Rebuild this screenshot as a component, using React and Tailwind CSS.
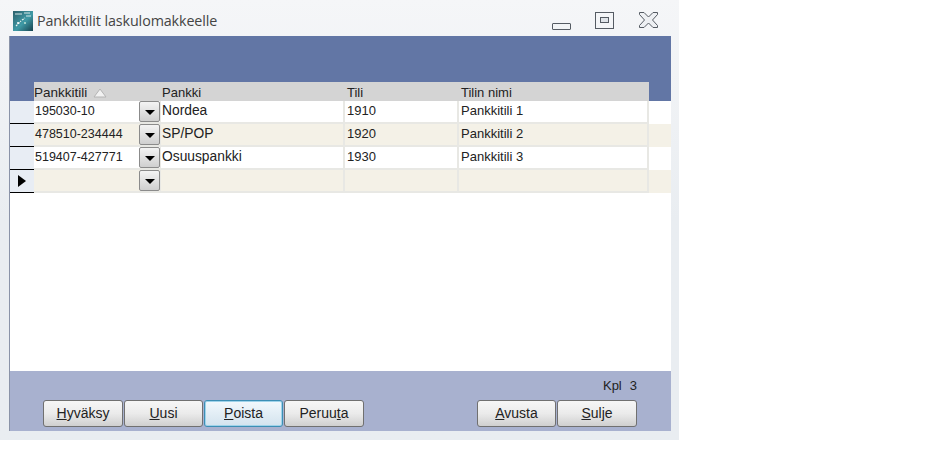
const rows = [
  { account: "195030-10", bank: "Nordea", tili: "1910", name: "Pankkitili 1" },
  { account: "478510-234444", bank: "SP/POP", tili: "1920", name: "Pankkitili 2" },
  { account: "519407-427771", bank: "Osuuspankki", tili: "1930", name: "Pankkitili 3" },
  { account: "", bank: "", tili: "", name: "", isNew: true },
];

function AppIcon() {
  return (
    <svg width="20" height="20" viewBox="0 0 20 20" className="shrink-0">
      <defs>
        <linearGradient id="ic" x1="0" y1="0" x2="1" y2="1">
          <stop offset="0" stopColor="#2c5f6b" />
          <stop offset="0.55" stopColor="#3f9aa6" />
          <stop offset="1" stopColor="#17424f" />
        </linearGradient>
      </defs>
      <rect width="20" height="20" fill="url(#ic)" />
      <path d="M2 3h7M11 2h6M13 5h5" stroke="#d5e6e6" strokeWidth="1" />
      <path d="M3 15l5-5M9 9l3-2" stroke="#e8f4f0" strokeWidth="1.2" strokeDasharray="2 1" />
      <circle cx="5" cy="12" r="1" fill="#fff" />
      <circle cx="12" cy="12" r="1" fill="#bfe3d6" />
    </svg>
  );
}

function WindowControls() {
  return (
    <div className="flex items-center ml-auto -mt-[1px]">
      <div className="w-[19px] h-[7px] mt-[12px] border border-[#555b63] rounded-[1px] bg-[#f2f4f6]" />
      <div className="ml-[24px] w-[19px] h-[17px] border border-[#555b63] flex items-center justify-center">
        <div className="w-[9px] h-[6px] border border-[#555b63] bg-[#dfe3e8]" />
      </div>
      <svg width="21" height="18" viewBox="0 0 21 18" className="ml-[24px]">
        <path
          d="M1.5 1.5h4.5l4.5 4.5 4.5-4.5h4.5v2l-5 5.500 5 5.500v2h-4.500l-4.500-4.500-4.500 4.500h-4.500v-2l5-5.500-5-5.500z"
          fill="#eef0f3"
          stroke="#555b63"
          strokeWidth="1"
        />
      </svg>
    </div>
  );
}

function Combo() {
  return (
    <div className="w-[21px] h-[21px] border border-[#8b8b8b] rounded-[2px] bg-gradient-to-b from-[#f4f4f4] to-[#cfcfcf] flex items-center justify-center">
      <div className="w-0 h-0 mt-[2px] border-x-[5px] border-x-transparent border-t-[5px] border-t-black" />
    </div>
  );
}

function Button({ children, focus, className }) {
  return (
    <button
      className={`h-[27px] rounded-[3px] border text-[14px] text-[#222] bg-gradient-to-b ${
        focus
          ? "border-[#3c8fb5] from-[#f2f9fd] to-[#d3e3ee] shadow-[inset_0_0_0_1px_#9fd3ea]"
          : "border-[#707070] from-[#f6f6f6] via-[#ebebeb] to-[#cfcfcf]"
      } ${className}`}
    >
      {children}
    </button>
  );
}

export default function App() {
  return (
    <div className="w-[945px] h-[468px] bg-white font-['Liberation_Sans',sans-serif] text-[12.500px] text-[#222]">
      <div className="w-[679px] h-[440px] flex flex-col bg-gradient-to-b from-[#f5f6f8] via-[#e9edf1] to-[#e9edf1] pl-[9px] pr-[8px]">
        <div className="h-[36px] flex items-center pt-[5px] pl-[4px] pr-[12px] shrink-0">
          <AppIcon />
          <span className="ml-[4px] text-[14.300px] text-[#444] font-['Open_Sans',sans-serif] tracking-[-0.1px]">
            Pankkitilit laskulomakkeelle
          </span>
          <WindowControls />
        </div>

        <div className="flex-1 flex flex-col border-l border-[#8a93a8] bg-white min-h-0">
          <div className="h-[65px] bg-[#6276a5] flex flex-col justify-end pl-[24px] pr-[22px] shrink-0">
            <div className="h-[19px] flex items-end bg-[#d4d4d4] text-[13px] text-[#222] leading-[16px]">
              <div className="w-[127px] flex items-center text-[13.500px]">
                Pankkitili
                <svg width="14" height="10" viewBox="0 0 14 10" className="ml-[6px]">
                  <path d="M7 1l6 8H1z" fill="#f2f2f2" stroke="#b4b4b4" />
                </svg>
              </div>
              <div className="w-[184px] pl-px">Pankki</div>
              <div className="w-[114px] pl-[2px]">Tili</div>
              <div className="flex-1 pl-[2px]">Tilin nimi</div>
            </div>
          </div>

          <div className="flex-1 min-h-0">
            {rows.map((r, i) => (
              <div
                key={i}
                className={`h-[23px] flex ${i % 2 === 0 && !r.isNew ? "bg-white" : "bg-[#f4f1e7]"}`}
              >
                <div className="w-[24px] shrink-0 bg-[#e8edf4] border-b border-black flex items-center justify-center">
                  {r.isNew && (
                    <div className="w-0 h-0 border-y-[6px] border-y-transparent border-l-[8px] border-l-black" />
                  )}
                </div>
                <div className="w-[615px] flex border-b-2 border-[#e8e8e4]">
                  <div className="w-[127px] flex items-center justify-between pl-px border-r border-[#e8e8e4]">
                    <span className="pb-px">{r.account}</span>
                    <Combo />
                  </div>
                  <div className="w-[184px] flex items-center pl-px border-r-2 border-[#e8e8e4] text-[13.800px]">{r.bank}</div>
                  <div className="w-[114px] flex items-center pl-[2px] pb-[2px] border-r-2 border-[#e8e8e4] text-[13px]">{r.tili}</div>
                  <div className="flex-1 flex items-center pl-[2px] pb-[2px] border-r-2 border-[#e8e8e4] text-[13px]">{r.name}</div>
                </div>
              </div>
            ))}
          </div>

          <div className="h-[60px] shrink-0 bg-[#a8b1cf] flex flex-col pl-[33px] pr-[34px]">
            <div className="h-[29px] flex items-center justify-end pt-[1px] text-[13px]">
              <span>Kpl</span>
              <span className="ml-[8px]">3</span>
            </div>
            <div className="flex">
              <Button className="w-[80px]"><u>H</u>yväksy</Button>
              <Button className="w-[79px] ml-px"><u>U</u>usi</Button>
              <Button focus className="w-[79px] ml-px"><u>P</u>oista</Button>
              <Button className="w-[80px] ml-px">Peruu<u>t</u>a</Button>
              <Button className="w-[79px] ml-auto"><u>A</u>vusta</Button>
              <Button className="w-[80px] ml-px"><u>S</u>ulje</Button>
            </div>
          </div>
        </div>
        <div className="h-[9px] shrink-0" />
      </div>
    </div>
  );
}
